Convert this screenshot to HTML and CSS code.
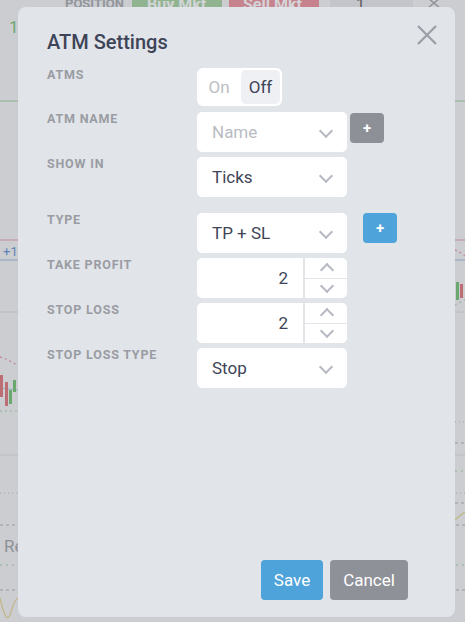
FILE: index.html
```html
<!DOCTYPE html>
<html>
<head>
    <meta charset="utf-8">
    <title>ATM Settings</title>
    <link rel="stylesheet" href="styles.css">
</head>
<body>

<!-- chart behind the dialog -->
<div class="chart">
    <svg class="chart-svg" width="465" height="622" viewBox="0 0 465 622">
        <rect x="0" y="0" width="465" height="622" fill="#f4f5f7"/>
        <!-- top toolbar -->
        <text x="65" y="8" class="tb-label">POSITION</text>
        <rect x="132" y="-6" width="90" height="18" rx="2" fill="#9fd19a"/>
        <text x="147" y="10" class="tb-btn">Buy Mkt</text>
        <rect x="229" y="-6" width="90" height="18" rx="2" fill="#ec8b96"/>
        <text x="243" y="10" class="tb-btn">Sell Mkt</text>
        <rect x="330" y="-6" width="83" height="18" fill="#e9eaec"/>
        <text x="356" y="10" class="tb-num">1</text>
        <path d="M428 -2 L440 8 M440 -2 L428 8" stroke="#a0a3a8" stroke-width="1.5"/>
        <text x="9" y="33" class="pos-num">1</text>
        <!-- price lines -->
        <line x1="0" y1="101" x2="465" y2="101" stroke="#9ccc98" stroke-width="1"/>
        <line x1="0" y1="240" x2="465" y2="240" stroke="#e49aa3" stroke-width="1"/>
        <line x1="0" y1="260" x2="465" y2="260" stroke="#94b6d8" stroke-width="1"/>
        <text x="3" y="256" class="lbl-blue">+1</text>
        <line x1="0" y1="312" x2="465" y2="312" stroke="#dcdde0"/>
        <line x1="0" y1="455" x2="465" y2="455" stroke="#dcdde0"/>
        <path d="M0 357 Q10 360 18 366" stroke="#e79aa5" stroke-width="1.5" stroke-dasharray="2 3" fill="none"/>
        <path d="M455 250 Q460 252 465 256" stroke="#e79aa5" stroke-width="1.5" stroke-dasharray="2 3" fill="none"/>
        <path d="M0 388 L18 390" stroke="#9ed4e0" stroke-width="1"/>
        <line x1="0" y1="411" x2="18" y2="411" stroke="#9ccc98" stroke-dasharray="2 3"/>
        <line x1="455" y1="305" x2="465" y2="300" stroke="#9ccc98" stroke-dasharray="2 3"/>
        <!-- candles -->
        <rect x="0" y="375" width="3" height="22" fill="#e06c72"/>
        <rect x="5" y="382" width="3" height="24" fill="#e06c72"/>
        <rect x="9" y="390" width="3" height="14" fill="#6cbf6a"/>
        <rect x="13" y="380" width="3" height="12" fill="#6cbf6a"/>
        <rect x="456" y="282" width="3" height="18" fill="#6cbf6a"/>
        <rect x="460" y="284" width="3" height="14" fill="#e06c72"/>
        <!-- dotted / dashed levels -->
        <line x1="0" y1="493" x2="465" y2="493" stroke="#b9bbbf" stroke-dasharray="1 3"/>
        <line x1="0" y1="525" x2="465" y2="525" stroke="#a9abb0" stroke-dasharray="3 3"/>
        <line x1="0" y1="565" x2="465" y2="565" stroke="#9ccc98" stroke-dasharray="2 4"/>
        <line x1="0" y1="590" x2="465" y2="590" stroke="#a9abb0" stroke-dasharray="3 3"/>
        <line x1="455" y1="422" x2="465" y2="422" stroke="#b9bbbf" stroke-dasharray="1 3"/>
        <line x1="455" y1="443" x2="465" y2="443" stroke="#a9abb0" stroke-dasharray="3 3"/>
        <line x1="455" y1="471" x2="465" y2="471" stroke="#9ccc98" stroke-dasharray="2 4"/>
        <line x1="455" y1="503" x2="465" y2="503" stroke="#a9abb0" stroke-dasharray="3 3"/>
        <text x="4" y="552" class="re">Re</text>
        <path d="M0 598 Q6 625 10 615 Q14 600 18 598" stroke="#e6d48a" stroke-width="1.2" fill="none"/>
        <path d="M455 520 Q460 515 465 512" stroke="#e6d48a" stroke-width="1.2" fill="none"/>
    </svg>
    <div class="overlay"></div>
</div>

<div class="modal">
    <div class="modal-head">
        <h1 class="modal-title">ATM Settings</h1>
        <button class="close" type="button" aria-label="Close">
            <svg width="20" height="20" viewBox="0 0 20 20"><path d="M1 1 L19 19 M19 1 L1 19" stroke="#9a9ea6" stroke-width="2.2" fill="none"/></svg>
        </button>
    </div>

    <div class="form">
        <div class="row">
            <label class="field-label">ATMs</label>
            <div class="toggle">
                <span class="seg">On</span>
                <span class="seg seg-active">Off</span>
            </div>
        </div>

        <div class="row">
            <label class="field-label">ATM Name</label>
            <div class="select placeholder">Name <span class="chev"></span></div>
            <button class="add add-grey" type="button">+</button>
        </div>

        <div class="row">
            <label class="field-label">Show in</label>
            <div class="select">Ticks <span class="chev"></span></div>
        </div>

        <div class="row row-type">
            <label class="field-label">Type</label>
            <div class="select">TP + SL <span class="chev"></span></div>
            <button class="add add-blue" type="button">+</button>
        </div>

        <div class="row">
            <label class="field-label">Take Profit</label>
            <div class="number">
                <span class="num-value">2</span>
                <span class="spin">
                    <span class="spin-btn"><span class="chev chev-up"></span></span>
                    <span class="spin-btn"><span class="chev"></span></span>
                </span>
            </div>
        </div>

        <div class="row">
            <label class="field-label">Stop Loss</label>
            <div class="number">
                <span class="num-value">2</span>
                <span class="spin">
                    <span class="spin-btn"><span class="chev chev-up"></span></span>
                    <span class="spin-btn"><span class="chev"></span></span>
                </span>
            </div>
        </div>

        <div class="row">
            <label class="field-label">Stop Loss Type</label>
            <div class="select">Stop <span class="chev"></span></div>
        </div>
    </div>

    <div class="modal-foot">
        <button class="btn btn-save" type="button">Save</button>
        <button class="btn btn-cancel" type="button">Cancel</button>
    </div>
</div>

</body>
</html>
```

FILE: styles.css
```css
html, body {
    margin: 0;
    padding: 0;
}
body {
    width: 465px;
    height: 622px;
    overflow: hidden;
    position: relative;
    font-family: Roboto, "Liberation Sans", Arial, sans-serif;
    color: #3e4457;
}

/* chart behind the dialog */
.chart {
    position: absolute;
    left: 0;
    top: 0;
    width: 465px;
    height: 622px;
}
.chart-svg {
    display: block;
}
.chart-svg text {
    font-family: Roboto, "Liberation Sans", Arial, sans-serif;
}
.tb-label {
    font-size: 13px;
    font-weight: bold;
    fill: #a3a6ab;
}
.tb-btn {
    font-size: 16px;
    font-weight: bold;
    fill: #fff;
}
.tb-num {
    font-size: 16px;
    fill: #555;
}
.pos-num {
    font-size: 17px;
    fill: #6cbf6a;
}
.lbl-blue {
    font-size: 13px;
    fill: #5b8fcf;
}
.re {
    font-size: 17px;
    fill: #9a9da3;
}
.overlay {
    position: absolute;
    left: 0;
    top: 0;
    right: 0;
    bottom: 0;
    background: rgba(110, 114, 122, 0.3);
}

/* dialog */
.modal {
    position: absolute;
    left: 18px;
    top: 7px;
    width: 437px;
    height: 610px;
    box-sizing: border-box;
    padding: 23px 47px 17px 29px;
    background: #e1e4e9;
    border-radius: 8px;
    display: flex;
    flex-direction: column;
}
.modal-head {
    display: flex;
    justify-content: space-between;
    align-items: flex-start;
}
.modal-title {
    margin: 0;
    font-size: 20px;
    line-height: 24px;
    font-weight: 500;
    color: #3e4457;
}
.close {
    border: 0;
    padding: 0;
    background: none;
    margin: -5px -29px 0 0;
    width: 20px;
    height: 20px;
    cursor: pointer;
}
.close svg {
    display: block;
}

.form {
    margin-top: 14px;
    display: flex;
    flex-direction: column;
    gap: 5px;
}
.row {
    display: flex;
    align-items: flex-start;
}
.row:first-child {
    margin-bottom: 1px;
}
.row-type {
    margin-top: 11px;
}
.field-label {
    width: 150px;
    flex: none;
    padding-top: 1px;
    font-size: 12.5px;
    line-height: 12px;
    font-weight: bold;
    letter-spacing: 0.8px;
    text-transform: uppercase;
    color: #9a9ca3;
}

.toggle {
    display: flex;
    gap: 2px;
    padding: 2px;
    background: #fff;
    border-radius: 6px;
}
.seg {
    width: 40px;
    height: 34px;
    line-height: 34px;
    text-align: center;
    font-size: 17px;
    color: #bcbec4;
    border-radius: 5px;
}
.seg-active {
    width: 39px;
    background: #eef0f3;
    color: #3e4457;
}

.select, .number {
    width: 150px;
    height: 40px;
    box-sizing: border-box;
    background: #fff;
    border-radius: 5px;
    font-size: 17px;
    line-height: 41px;
    color: #3e4457;
    position: relative;
}
.select {
    padding-left: 15px;
}
.select.placeholder {
    color: #b9bcc3;
}
.chev {
    position: absolute;
    right: 16px;
    top: 14px;
    width: 8px;
    height: 8px;
    border-right: 2px solid #b5b8c0;
    border-bottom: 2px solid #b5b8c0;
    transform: rotate(45deg);
}

.number {
    display: flex;
}
.num-value {
    flex: 1;
    text-align: right;
    padding-right: 15px;
}
.spin {
    width: 42px;
    border-left: 2px solid #e1e4e9;
    display: flex;
    flex-direction: column;
}
.spin-btn {
    flex: 1;
    position: relative;
}
.spin-btn + .spin-btn {
    border-top: 1px solid #e1e4e9;
}
.spin .chev {
    right: 15px;
    top: 2px;
    width: 8px;
    height: 8px;
}
.spin .chev-up {
    top: 7px;
    transform: rotate(-135deg);
}

.add {
    border: 0;
    width: 34px;
    height: 30px;
    border-radius: 4px;
    color: #fff;
    font-size: 15px;
    font-weight: bold;
    font-family: Roboto, "Liberation Sans", Arial, sans-serif;
    padding: 0;
    cursor: pointer;
}
.add-grey {
    margin: 1px 0 0 3px;
    background: #8d9197;
}
.add-blue {
    margin-left: 16px;
    background: #4fa3db;
}

.modal-foot {
    margin-top: auto;
    display: flex;
    justify-content: flex-end;
    gap: 7px;
}
.btn {
    border: 0;
    height: 40px;
    border-radius: 4px;
    color: #fff;
    font-size: 17px;
    font-family: Roboto, "Liberation Sans", Arial, sans-serif;
    cursor: pointer;
}
.btn-save {
    width: 62px;
    background: #4fa3db;
}
.btn-cancel {
    width: 78px;
    background: #8e9198;
}
```
